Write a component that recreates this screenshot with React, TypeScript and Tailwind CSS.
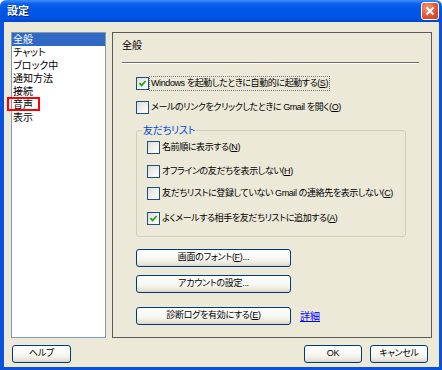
import React from 'react';

const font = "font-['Liberation_Sans','Noto_Sans_CJK_JP',sans-serif] [font-feature-settings:'palt']";

function Check({ checked }: { checked?: boolean }) {
  return (
    <span className="w-[13px] h-[13px] shrink-0 border border-[#1c5180] bg-[linear-gradient(135deg,#dcdcd7,#f7f7f4_70%,#ffffff)] flex items-center justify-center">
      {checked && (
        <svg width="9" height="9" viewBox="0 0 9 9">
          <path d="M1.5 4.2 L3.6 6.4 L7.6 2" fill="none" stroke="#21a121" strokeWidth="1.8" />
        </svg>
      )}
    </span>
  );
}

function CheckRow({ checked, focused, children }: { checked?: boolean; focused?: boolean; children: React.ReactNode }) {
  return (
    <div className="flex items-center h-[15px] whitespace-nowrap">
      <Check checked={checked} />
      <span className={`ml-[1px] px-[1px] text-[9px] leading-[13px] tracking-[-0.4px] ${focused ? 'outline outline-1 outline-dotted outline-[#777]' : ''}`}>
        {children}
      </span>
    </div>
  );
}

function XpButton({ className, children }: { className?: string; children: React.ReactNode }) {
  return (
    <div
      className={`h-[18px] flex items-center justify-center whitespace-nowrap tracking-[-0.3px] border border-[#003c74] rounded-[3px] bg-[linear-gradient(180deg,#ffffff_0%,#f6f5f0_60%,#e6e3d6_90%,#d6d0c5_100%)] text-[9px] text-black ${className ?? ''}`}
    >
      {children}
    </div>
  );
}

const items = ['全般', 'チャット', 'ブロック中', '通知方法', '接続', '音声', '表示'];

export default function App() {
  return (
    <div className={`w-[442px] h-[370px] flex flex-col ${font} text-[10px] text-black overflow-hidden`}>
      {/* title bar */}
      <div className="h-[22px] shrink-0 flex items-center pl-[7px] pr-[3px] rounded-t-[6px] bg-[linear-gradient(180deg,#3d8ef7_0%,#0a5fea_18%,#0056e6_50%,#0052e2_85%,#0043cc_100%)]">
        <span className="text-white font-bold text-[11px] [text-shadow:1px_1px_0_#0a2a7a]">設定</span>
        <div className="ml-auto w-[18px] h-[18px] rounded-[3px] border border-white bg-[radial-gradient(circle_at_35%_30%,#f49a7c,#e0512f_60%,#c4401f)] flex items-center justify-center">
          <svg width="10" height="10" viewBox="0 0 10 10">
            <path d="M1.5 1.5 L8.5 8.5 M8.5 1.5 L1.5 8.5" stroke="#fff" strokeWidth="2" />
          </svg>
        </div>
      </div>

      {/* body */}
      <div className="flex-1 flex flex-col bg-[#ece9d8] border-l-4 border-r-[3px] border-b-[3px] border-[#0a52dc] pl-[7px] pr-[7px] pt-[10px]">
        <div className="flex gap-[6px] h-[306px]">
          {/* list */}
          <div className="relative w-[95px] h-full bg-white border border-[#7f9db9]">
            {items.map((t, i) => (
              <div
                key={t}
                className={`h-[13px] leading-[13px] pl-[1px] ${i === 0 ? 'bg-[#316ac5] text-white' : ''}`}
              >
                {t}
              </div>
            ))}
            <div className="absolute left-[-5px] top-[64px] w-[33px] h-[14px] border-2 border-[#ff0000]" />
          </div>

          {/* panel */}
          <div className="w-[320px] h-full border border-[#5a5a5a] flex flex-col">
            <div className="pl-[9px] pt-[7px] leading-[12px]">全般</div>
            <div className="ml-[9px] mt-[10px] w-[297px] border-t border-[#6b6b6b] border-b border-b-white" />

            <div className="ml-[23px] mt-[12px]">
              <CheckRow checked focused>
                Windows を起動したときに自動的に起動する(<u>S</u>)
              </CheckRow>
            </div>
            <div className="ml-[23px] mt-[9px]">
              <CheckRow>
                メールのリンクをクリックしたときに Gmail を開く(<u>O</u>)
              </CheckRow>
            </div>

            <fieldset className="ml-[23px] mt-[9px] w-[270px] border border-[#d0d0bf] rounded-[3px] pb-[10px]">
              <legend className="ml-[5px] px-[1px] leading-[13px] text-[#0046d5] tracking-[-0.3px]">友だちリスト</legend>
              <div className="pl-[10px]">
                <div className="mt-[3px]">
                  <CheckRow>
                    名前順に表示する(<u>N</u>)
                  </CheckRow>
                </div>
                <div className="mt-[9px]">
                  <CheckRow>
                    オフラインの友だちを表示しない(<u>H</u>)
                  </CheckRow>
                </div>
                <div className="mt-[7px]">
                  <CheckRow>
                    友だちリストに登録していない Gmail の連絡先を表示しない(<u>C</u>)
                  </CheckRow>
                </div>
                <div className="mt-[10px]">
                  <CheckRow checked>
                    よくメールする相手を友だちリストに追加する(<u>A</u>)
                  </CheckRow>
                </div>
              </div>
            </fieldset>

            <XpButton className="ml-[23px] mt-[12px] w-[155px]">
              画面のフォント(<u>F</u>)...
            </XpButton>
            <XpButton className="ml-[23px] mt-[8px] w-[155px]">アカウントの設定...</XpButton>
            <div className="ml-[23px] mt-[14px] flex items-center">
              <XpButton className="w-[155px]">
                診断ログを有効にする(<u>E</u>)
              </XpButton>
              <span className="ml-[9px] text-[#0000ff] underline">詳細</span>
            </div>
          </div>
        </div>

        {/* bottom buttons */}
        <div className="mt-[7px] flex">
          <XpButton className="ml-[1px] w-[59px]">ヘルプ</XpButton>
          <XpButton className="ml-auto w-[58px]">OK</XpButton>
          <XpButton className="ml-[8px] mr-[4px] w-[58px]">キャンセル</XpButton>
        </div>
      </div>
    </div>
  );
}
